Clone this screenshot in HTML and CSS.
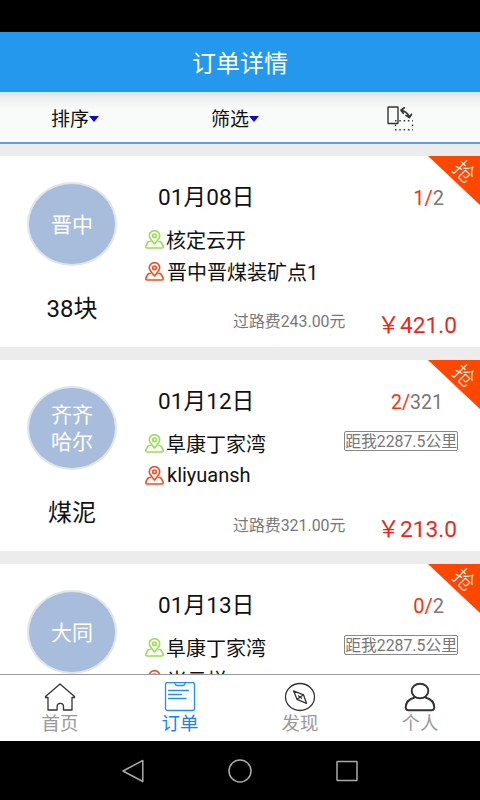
FILE: index.html
```html
<!DOCTYPE html>
<html lang="zh-CN">
<head>
<meta charset="utf-8">
<title>订单详情</title>
<link rel="stylesheet" href="styles.css">
</head>
<body>
<svg class="defs" width="0" height="0">
  <symbol id="pin" viewBox="0 0 19 19">
    <path d="M9.5 14C7.2 10.800 4.300 8.500 4.300 5.700a5.200 5 0 0 1 10.400 0C14.700 8.500 11.800 10.800 9.500 14z"/>
    <circle cx="9.500" cy="5.800" r="1.800"/>
    <path d="M5.500 11.500H4.300Q3.300 11.500 2.800 12.400L1.100 15.500Q.2 18 2.500 18H16.500Q18.800 18 17.900 15.500L16.200 12.400Q15.700 11.500 14.700 11.500H13.500"/>
  </symbol>
</svg>
<div class="screen">
  <div class="status"></div>
  <header class="header">订单详情</header>
  <div class="toolbar">
    <div class="tool">排序<i class="caret"></i></div>
    <div class="tool">筛选<i class="caret"></i></div>
    <div class="tool">
      <svg class="rotate" width="28" height="28" viewBox="0 0 28 28">
        <rect x="2" y="2" width="10" height="16.500" rx=".5"/>
        <path class="arrow" d="M15.500 5.500Q21 6.500 23.500 12M18.300 2.800L15 5.300L17.300 8.300M20 10.500L23.500 12.500L25.500 9.300"/>
        <path class="dots" d="M9 15.800H27M9 24.800H27M9.500 19.500V23M26.500 19.500V23"/>
      </svg>
    </div>
  </div>
  <main class="list">
    <article class="card">
      <div class="side"><div class="avatar">晋中</div><div class="goods">38块</div></div>
      <div class="main">
        <div class="row top"><span class="date">01月08日</span><span class="count"><b>1/</b>2</span></div>
        <div class="row stop"><svg class="pin from"><use href="#pin"/></svg><span>核定云开</span></div>
        <div class="row stop"><svg class="pin to"><use href="#pin"/></svg><span>晋中晋煤装矿点1</span></div>
        <div class="row cost"><span class="toll">过路费243.00元</span><span class="price">￥421.0</span></div>
      </div>
      <div class="ribbon"><span>抢</span></div>
    </article>
    <article class="card">
      <div class="side"><div class="avatar">齐齐<br>哈尔</div><div class="goods">煤泥</div></div>
      <div class="main">
        <div class="row top"><span class="date">01月12日</span><span class="count wide"><b>2/</b>321</span></div>
        <div class="row stop"><svg class="pin from"><use href="#pin"/></svg><span>阜康丁家湾</span><span class="distance">距我2287.5公里</span></div>
        <div class="row stop"><svg class="pin to"><use href="#pin"/></svg><span>kliyuansh</span></div>
        <div class="row cost"><span class="toll">过路费321.00元</span><span class="price">￥213.0</span></div>
      </div>
      <div class="ribbon"><span>抢</span></div>
    </article>
    <article class="card">
      <div class="side"><div class="avatar">大同</div></div>
      <div class="main">
        <div class="row top"><span class="date">01月13日</span><span class="count"><b>0/</b>2</span></div>
        <div class="row stop"><svg class="pin from"><use href="#pin"/></svg><span>阜康丁家湾</span><span class="distance">距我2287.5公里</span></div>
        <div class="row stop"><svg class="pin to"><use href="#pin"/></svg><span>米云样</span></div>
      </div>
      <div class="ribbon"><span>抢</span></div>
    </article>
  </main>
  <nav class="tabs">
    <div class="tab">
      <svg width="32" height="30" viewBox="0 0 32 30"><path d="M1.500 14.500L16 2L30.500 14.500V15.500H28V28H19.500V24.500a3.200 3.200 0 0 0-6.400 0V28H4V15.500H1.500z"/></svg>
      首页
    </div>
    <div class="tab active">
      <svg width="32" height="30" viewBox="0 0 32 30"><rect x="1.500" y=".5" width="29" height="28" rx="2"/><path d="M10 .5C11.500 1 11 3.500 13 3.500H19C21 3.500 20.500 1 22 .5M4.500 8.500H24.500M4.500 12.500H17.500M4.500 16.500H22"/></svg>
      订单
    </div>
    <div class="tab">
      <svg width="32" height="30" viewBox="0 0 32 30"><ellipse cx="16" cy="15" rx="14.500" ry="13.500"/><path d="M9.500 8.800L19.500 12.800L22.500 21.300L13 17.300zM13 17.300L19.500 12.800M14.600 14L17.600 16.200"/></svg>
      发现
    </div>
    <div class="tab">
      <svg class="person" width="32" height="30" viewBox="0 0 32 30"><ellipse cx="16" cy="9" rx="8.300" ry="7.300"/><path d="M10.500 15.500C5 17 1.700 20 1.700 25.500Q1.700 28.200 4.500 28.200H27.500Q30.300 28.200 30.300 25.500C30.300 20 27 17 21.500 15.500"/></svg>
      个人
    </div>
  </nav>
  <div class="system">
    <svg width="24" height="24" viewBox="0 0 24 24"><path d="M21.800 1.500V22.500L2 12z"/></svg>
    <svg width="24" height="24" viewBox="0 0 24 24"><circle cx="12" cy="12" r="11"/></svg>
    <svg width="24" height="24" viewBox="0 0 24 24"><rect x="2" y="2.500" width="20" height="19" rx=".5"/></svg>
  </div>
</div>
</body>
</html>
```

FILE: styles.css
```css
* { box-sizing: border-box; }
body { margin: 0; font-family: Roboto, "Noto Sans CJK SC", sans-serif; color: #111; background: #000; }
svg { fill: none; stroke-linecap: round; stroke-linejoin: round; flex: none; }
.defs { position: absolute; }
.screen { width: 480px; height: 800px; display: flex; flex-direction: column; overflow: hidden; white-space: nowrap; }
.status { height: 32px; flex: none; background: #000; }
.header { height: 60px; flex: none; background: #2398ed; color: #fff; font-size: 24px; line-height: 64px; text-align: center; }
.toolbar { height: 52px; flex: none; display: grid; grid-template-columns: 160px 160px 160px; border-bottom: 2px solid #5a9fe8; background: linear-gradient(#dce0e0 0, #eef0f0 6px, #f9fafa 18px, #fafafa 100%); }
.tool { display: flex; align-items: center; padding-left: 51px; font-size: 19px; line-height: 52px; padding-top: 2px; }
.caret { border: 5px solid transparent; border-top: 6px solid #1205d2; border-bottom: 0; margin-bottom: 2px; }
.rotate { margin: 0 0 2px 15px; stroke: #333; stroke-width: 1.400; }
.rotate .arrow { stroke-width: 1.700; }
.rotate .dots { stroke-dasharray: 1.500 2.800; stroke-linecap: butt; }
.list { flex: 1; min-height: 0; overflow: hidden; background: #ececec; padding-top: 12px; }
.card { position: relative; display: flex; height: 191px; margin-bottom: 13px; background: #fff; }
.side { width: 144px; display: flex; flex-direction: column; align-items: center; padding-top: 26px; }
.avatar { width: 90px; height: 84px; border-radius: 50%; border: 2px solid #dfe5eb; background: #a8bddb; color: #fff; font-size: 21px; line-height: 27px; display: flex; align-items: center; justify-content: center; padding-top: 2px; }
.goods { margin-top: 27px; font-size: 24px; line-height: 32px; }
.main { flex: 1; padding: 21px 0 0; }
.row { display: flex; align-items: center; }
.top { height: 36px; padding: 0 36px 0 14px; justify-content: space-between; }
.date { font-size: 22.5px; letter-spacing: .15px; }
.count { font-size: 20px; color: #777; padding-top: 6px; }
.count.wide { margin-right: 1px; font-size: 19.5px; }
.count b { font-weight: 400; color: #f0340a; }
.stop { height: 32px; margin-top: 10px; padding-right: 22px; font-size: 20px; }
.stop + .stop { margin-top: 0; }
.pin { width: 19px; height: 19px; margin: 0 2px 0 1px; stroke-width: 1.600; }
.from { stroke: #9bdc55; }
.to { stroke: #f04c20; margin-right: 3px; }
.distance { margin: 0 0 4px auto; height: 20px; border: 1px solid #888; border-radius: 2px; color: #777; font-size: 15.8px; line-height: 20px; }
.cost { height: 36px; margin-top: 18px; padding: 0 23px 0 89px; justify-content: space-between; }
.toll { font-size: 15.900px; color: #777; padding-bottom: 6px; }
.price { font-size: 22.700px; color: #e5291c; }
.ribbon { position: absolute; top: 0; right: 0; width: 52px; height: 49px; background: #ff4700; clip-path: polygon(0 0, 100% 0, 100% 100%); color: #fff; }
.ribbon span { position: absolute; left: 25px; top: 5px; font-size: 21px; font-weight: 300; line-height: 22px; transform: rotate(45deg); }
.tabs { height: 67px; flex: none; display: grid; grid-template-columns: repeat(4, 1fr); border-top: 1px solid #999; background: #fff; }
.tab { display: flex; flex-direction: column; align-items: center; padding-top: 7px; color: #999; font-size: 18.500px; line-height: 25px; }
.tab svg { stroke: #333; stroke-width: 1.300; }
.tab .person { stroke-width: 1.900; }
.tab.active { color: #1685e8; }
.tab.active svg { stroke: #2490e8; }
.system { height: 59px; flex: none; background: #000; display: flex; justify-content: center; align-items: center; gap: 83px; }
.system svg { stroke: #aaa; stroke-width: 1.500; }
```
